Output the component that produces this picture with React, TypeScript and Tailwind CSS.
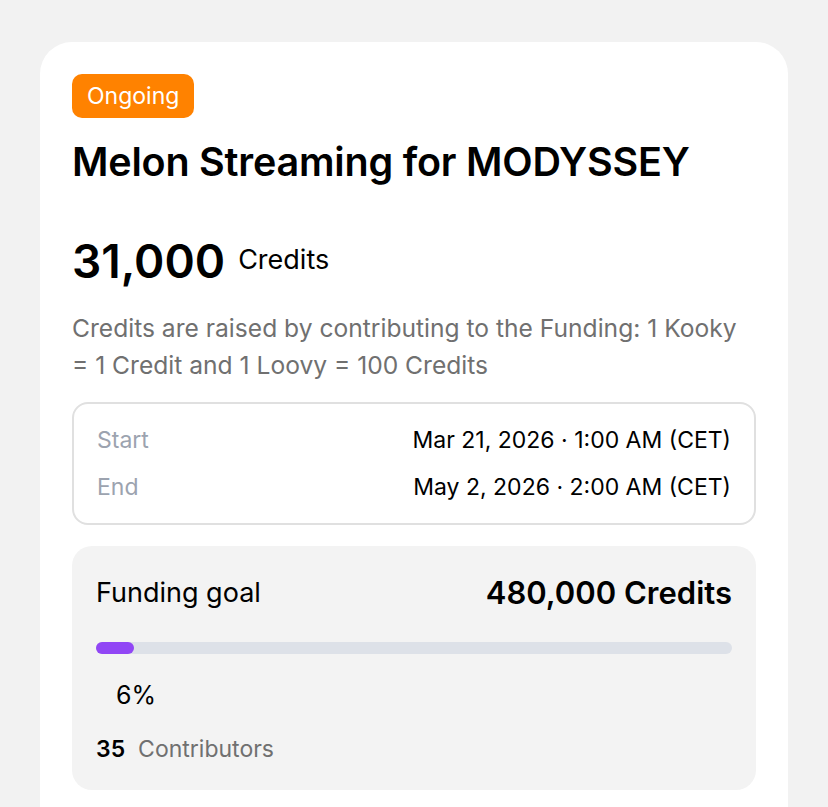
import React from "react";

export default function App() {
  const pct = 6;
  return (
    <div
      className="min-h-[807px] w-[828px] overflow-hidden bg-[#f2f2f2] pt-[42px] pl-10"
      style={{ fontFamily: "Inter, 'Noto Sans', sans-serif" }}
    >
      <div className="w-[748px] rounded-t-[32px] bg-white px-8 pt-8 pb-10">
        <div className="inline-flex h-[44px] items-center rounded-[10px] bg-[#ff8200] px-[15px] text-[23px] text-white">
          Ongoing
        </div>
        <h1 className="mt-[20px] text-[39.5px] font-semibold leading-[48px] tracking-[-0.2px] text-black">
          Melon Streaming for MODYSSEY
        </h1>
        <div className="mt-[47px] flex items-center gap-[13px]">
          <span className="text-[46px] font-semibold leading-[56px] text-black">31,000</span>
          <span className="mt-[-2px] text-[27px] leading-[36px] text-black">Credits</span>
        </div>
        <p className="mt-[21px] text-[24.6px] leading-[37px] text-[#707070]">
          Credits are raised by contributing to the Funding: 1 Kooky = 1 Credit and 1 Loovy = 100 Credits
        </p>
        <div className="mt-[18px] flex flex-col gap-[15px] rounded-[16px] border-2 border-[#e0e0e0] px-[23px] pt-[20px] pb-[20px] text-[23px] leading-[32px]">
          <div className="flex justify-between">
            <span className="text-[#9ca3af]">Start</span>
            <span className="text-black">Mar 21, 2026 · 1:00 AM (CET)</span>
          </div>
          <div className="flex justify-between">
            <span className="text-[#9ca3af]">End</span>
            <span className="text-black">May 2, 2026 · 2:00 AM (CET)</span>
          </div>
        </div>
        <div className="mt-[21px] rounded-[20px] bg-[#f3f3f3] px-6 pt-[29px] pb-[25px]">
          <div className="flex items-center justify-between">
            <span className="text-[27px] leading-[36px] text-black">Funding goal</span>
            <span className="text-[31px] font-semibold leading-[36px] text-black">480,000 Credits</span>
          </div>
          <div className="mt-[31px] h-[12px] w-full rounded-full bg-[#dde1e8]">
            <div className="h-full rounded-full bg-[#9146f5]" style={{ width: `${pct}%` }} />
          </div>
          <div className="mt-[25px] pl-5 text-[25px] leading-[32px] text-black">{pct}%</div>
          <div className="mt-[22px] flex items-baseline gap-[13px] text-[23px] leading-[32px]">
            <span className="font-semibold text-black">35</span>
            <span className="text-[#707070]">Contributors</span>
          </div>
        </div>
      </div>
    </div>
  );
}
